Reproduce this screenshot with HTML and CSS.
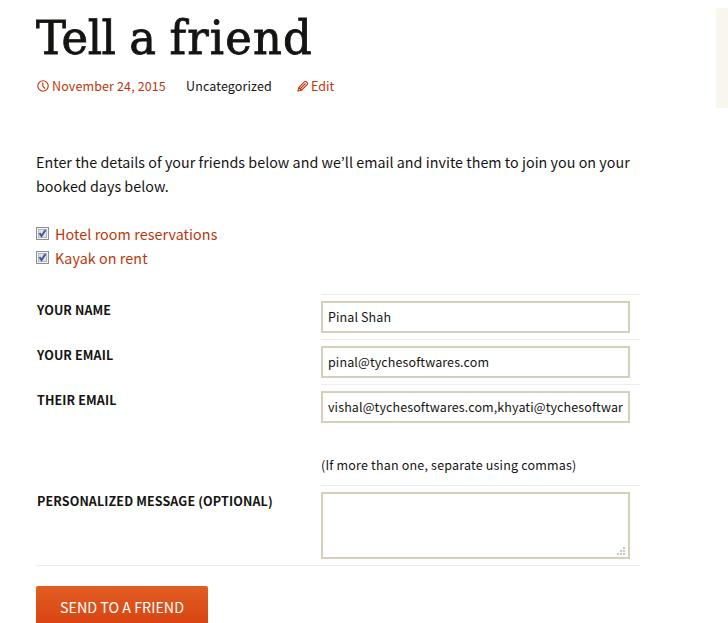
FILE: index.html
```html
<!DOCTYPE html>
<html lang="en">
<head>
<meta charset="utf-8">
<title>Tell a friend</title>
<link rel="stylesheet" href="styles.css">
</head>
<body>
<div class="page">
  <main class="content">
    <h1 class="title"><span>Tell a <b>friend</b></span></h1>
    <div class="meta">
      <a class="date" href="#"><svg width="12" height="12" viewBox="0 0 12 12"><circle cx="6" cy="6" r="5.2"/><path d="M5.8 2.5V6L8 8.6"/></svg><span>November 24, 2015</span></a>
      <span class="category">Uncategorized</span>
      <a class="edit" href="#"><svg width="12" height="12" viewBox="0 0 12 12"><path d="M1 11L1.8 7.5L7.6 1.6Q8.3.9 9.1 1.6L10.4 2.9Q11.1 3.7 10.4 4.4L4.5 10.2ZM1.8 7.5L4.5 10.2M3.5 8.5L8.6 3.4"/></svg><span>Edit</span></a>
    </div>
    <p class="intro">Enter the details of your friends below and we’ll email and invite them to join you on your<br><span class="intro-end">booked days below.</span></p>
    <div class="bookings">
      <label class="booking"><svg class="check" width="13" height="13" viewBox="0 0 13 13"><use href="#box"/></svg><a class="hotel" href="#">Hotel room reservations</a></label>
      <label class="booking"><svg class="check" width="13" height="13" viewBox="0 0 13 13"><g id="box"><rect x=".5" y=".5" width="12" height="12" fill="#f4f4f4" stroke="#8e8f8f"/><rect x="2.5" y="2.5" width="8" height="8" fill="#dfe3e8" stroke="#b3b9c0"/><path d="M3.5 6.2L5.5 9L9.5 3" fill="none" stroke="#40589c" stroke-width="2"/></g></svg><a class="kayak" href="#">Kayak on rent</a></label>
    </div>
    <form class="form">
      <div class="row"><label for="name">Your name</label><div class="cell"><input id="name" value="Pinal Shah"></div></div>
      <div class="row"><label for="email">Your email</label><div class="cell"><input id="email" value="pinal@tychesoftwares.com"></div></div>
      <div class="row"><label for="friends">Their email</label><div class="cell cell-note"><input class="friends" id="friends" value="vishal@tychesoftwares.com,khyati@tychesoftwares.com"><p class="note">(If more than one, separate using commas)</p></div></div>
      <div class="row"><label for="message">Personalized message (optional)</label><div class="cell"><div class="area"><textarea id="message"></textarea><svg class="grip" width="8" height="8" viewBox="0 0 8 8"><path d="M6 0h2v2H6zM3 3h2v2H3zM6 3h2v2H6zM0 6h2v2H0zM3 6h2v2H3zM6 6h2v2H6z"/></svg></div></div></div>
    </form>
    <button class="send"><span>SEND TO A FRIEND</span></button>
  </main>
  <aside class="sidebar"></aside>
</div>
</body>
</html>
```
FILE: styles.css
```css
* { box-sizing: border-box; }
body {
  margin: 0;
  height: 623px;
  overflow: hidden;
  background: #fff;
  color: #141412;
  font: 14.3px/24px "Noto Sans CJK JP", "Open Sans", sans-serif;
}
a { color: #bc360a; text-decoration: none; }
.page { display: flex; justify-content: space-between; height: 623px; overflow: hidden; }
.content { width: 604px; margin-left: 36px; flex: none; }
.sidebar { width: 12px; height: 100px; margin-top: 8px; background: #f9f6ee; }
.title {
  height: 62px;
  margin: 7px 0 5px;
  font: 400 47px/62px "DejaVu Serif Condensed", "DejaVu Serif", serif;
  letter-spacing: -.4px;
  white-space: nowrap;
}
.title span {
  display: inline-block;
  transform: scaleX(1.06);
  transform-origin: 0 50%;
  -webkit-text-stroke: .8px #141412;
}
.title b { font-weight: 400; letter-spacing: 1.1px; }
.meta { display: flex; height: 24px; font-size: 12.5px; letter-spacing: .13px; white-space: nowrap; }
.meta a { display: flex; align-items: center; }
.meta svg { flex: none; fill: none; stroke: #bc360a; stroke-width: 1.1; }
.date { width: 150px; padding-left: 1px; gap: 3px; }
.category { width: 111px; }
.edit { gap: 2px; letter-spacing: 0; }
.intro { margin: 52px 0 24px; letter-spacing: .03px; white-space: nowrap; }
.bookings { margin-bottom: 24px; letter-spacing: .08px; }
.booking { display: flex; height: 24px; gap: 6px; }
.check { flex: none; margin-top: 5px; }
.form { border-bottom: 1px solid #ededed; font-size: 12.5px; letter-spacing: .12px; }
.row { display: grid; grid-template-columns: 285px 319px; }
.row > label { padding: 4px 0 0 1px; font-weight: 700; text-transform: uppercase; white-space: nowrap; }
.cell { border-top: 1px solid #ededed; padding: 6px 0; }
.cell-note { height: 101px; }
input, textarea {
  display: block;
  width: 309px;
  height: 32px;
  margin: 0;
  padding: 0 5px 2px;
  border: 2px solid #d4d0ba;
  border-radius: 0;
  background: #fff;
  color: #141412;
  font: inherit;
  letter-spacing: .11px;
  outline: 0;
}
.area { position: relative; width: 309px; }
textarea { height: 67px; resize: none; }
.grip { position: absolute; right: 5px; bottom: 4px; fill: #c8c8c8; }
.note { margin: 30px 0 0; letter-spacing: .19px; white-space: nowrap; }
.send {
  display: flex;
  justify-content: center;
  width: 172px;
  height: 44px;
  margin-top: 20px;
  padding: 9px 0 0;
  border: 0;
  border-radius: 2px;
  background: linear-gradient(#e05d22, #d94412 88%);
  color: #fff;
  font: inherit;
  line-height: 24px;
  white-space: nowrap;
}
```
